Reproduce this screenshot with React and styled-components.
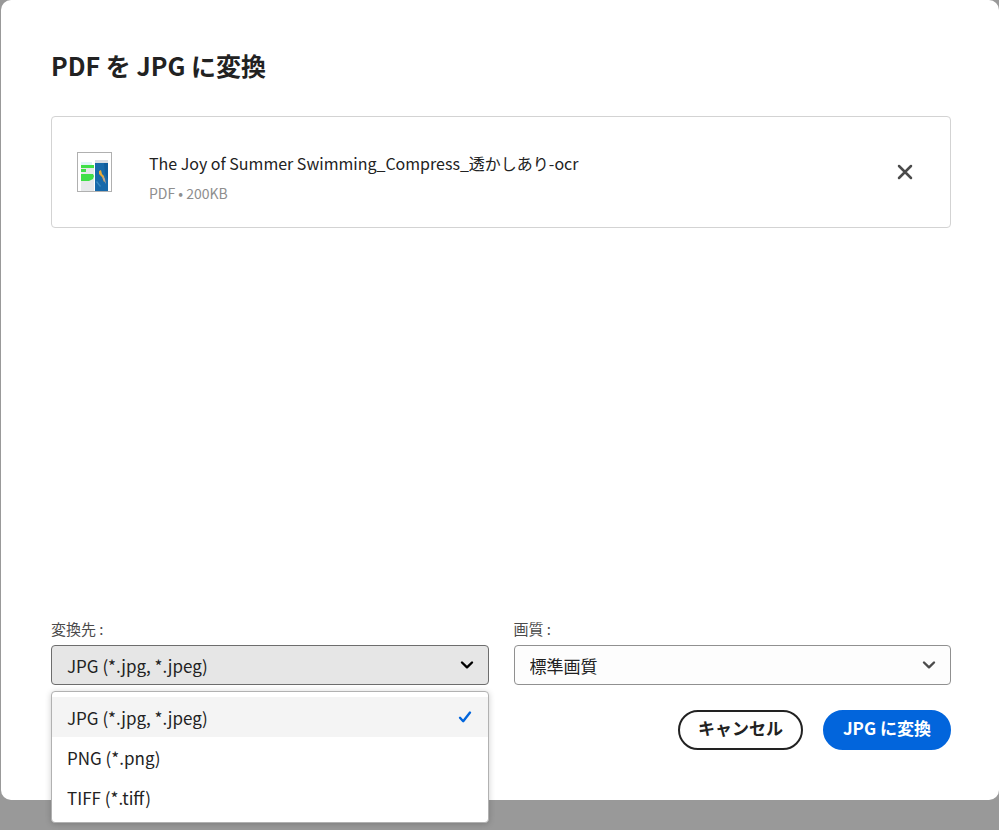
import React, { useState } from 'react'
import styled, { createGlobalStyle } from 'styled-components'

const colors = {
  text: '#222222',
  label: '#4b4b4b',
  muted: '#8e8e8e',
  border: '#d3d3d3',
  field: '#909090',
  blue: '#0265dc',
}

const formats = ['JPG (*.jpg, *.jpeg)', 'PNG (*.png)', 'TIFF (*.tiff)']
const qualities = ['標準画質']

const GlobalStyle = createGlobalStyle`
  * {
    box-sizing: border-box;
  }
  body {
    margin: 0;
    background: #999999;
    color: ${colors.text};
    font-family: 'Noto Sans CJK JP', 'Noto Sans', sans-serif;
  }
  button, select {
    font-family: inherit;
    color: inherit;
    margin: 0;
  }
`

const Dialog = styled.main`
  display: flex;
  flex-direction: column;
  min-height: calc(100vh - 30px);
  margin: 0 0 30px 1px;
  padding: 47px 48px 50px 50px;
  background: #ffffff;
  border-radius: 10px;
`

const Title = styled.h1`
  margin: 0 0 33px;
  font-size: 25px;
  line-height: 36px;
  font-weight: 700;
`

const Files = styled.div`
  flex: 1;
`

const FileCard = styled.section`
  display: flex;
  align-items: center;
  height: 112px;
  padding: 0 33px 0 25px;
  border: 1px solid ${colors.border};
  border-radius: 4px;
`

const Thumb = styled.svg`
  flex: none;
  width: 35px;
  height: 40px;
`

const FileInfo = styled.div`
  flex: 1;
  min-width: 0;
  margin-left: 37px;
  padding-top: 9px;
`

const FileName = styled.div`
  font-size: 16px;
  line-height: 32px;
`

const FileMeta = styled.div`
  color: ${colors.muted};
  font-size: 14px;
  line-height: 28px;
`

const CloseButton = styled.button`
  display: flex;
  padding: 4px;
  border: 0;
  background: none;
  color: ${colors.label};
  cursor: pointer;
`

const Fields = styled.div`
  display: grid;
  grid-template-columns: 1fr 1fr;
  gap: 25px;
`

const Field = styled.div`
  position: relative;
`

const Label = styled.label`
  display: block;
  padding-bottom: 4px;
  color: ${colors.label};
  font-size: 15px;
  line-height: 24px;
`

const SelectBox = styled.div`
  display: grid;
  align-items: center;
  color: ${props => (props.$open ? '#000000' : colors.label)};

  > * {
    grid-area: 1 / 1;
  }
  svg {
    justify-self: end;
    margin-right: 15px;
    pointer-events: none;
  }
`

const Select = styled.select`
  appearance: none;
  width: 100%;
  height: 40px;
  padding: 0 40px 0 15px;
  border: 1px solid ${props => (props.$open ? '#6d6d6d' : colors.field)};
  border-radius: 4px;
  background: ${props => (props.$open ? '#e6e6e6' : '#fdfdfd')};
  color: ${colors.text};
  font-size: 17px;
`

const Menu = styled.ul`
  position: absolute;
  top: 100%;
  left: 0;
  right: 0;
  margin: 6px 0 0;
  padding: 5px 0;
  list-style: none;
  border: 1px solid #b1b1b1;
  border-radius: 4px;
  background: #ffffff;
  box-shadow: 0 1px 6px rgba(0, 0, 0, 0.2);
`

const Option = styled.li`
  display: flex;
  align-items: center;
  justify-content: space-between;
  height: 40px;
  padding: 0 16px 0 15px;
  background: ${props => (props.$selected ? '#f4f4f4' : 'none')};
  font-size: 17px;
  cursor: pointer;

  svg {
    color: ${colors.blue};
  }
`

const Actions = styled.div`
  display: flex;
  justify-content: flex-end;
  gap: 20px;
  margin-top: 25px;
`

const Button = styled.button`
  height: 40px;
  padding: 0 18px 4px;
  border: 2px solid ${props => (props.$primary ? colors.blue : colors.text)};
  border-radius: 20px;
  background: ${props => (props.$primary ? colors.blue : '#ffffff')};
  color: ${props => (props.$primary ? '#ffffff' : colors.text)};
  font-size: 17px;
  line-height: 24px;
  font-weight: 700;
  cursor: pointer;
`

function Chevron() {
  return (
    <svg width="14" height="10" viewBox="0 0 14 10" fill="none" aria-hidden="true">
      <path d="M2 2.5l5 4.8 5-4.8" stroke="currentColor" strokeWidth="2.4" strokeLinecap="round" strokeLinejoin="round" />
    </svg>
  )
}

function Check() {
  return (
    <svg width="14" height="14" viewBox="0 0 14 14" fill="none" aria-hidden="true">
      <path d="M2 7.8l3.2 3.4L12 2.6" stroke="currentColor" strokeWidth="2.4" strokeLinecap="round" strokeLinejoin="round" />
    </svg>
  )
}

function Cross() {
  return (
    <svg width="16" height="16" viewBox="0 0 16 16" fill="none" aria-hidden="true">
      <path d="M2 2l12 12M14 2L2 14" stroke="currentColor" strokeWidth="2.5" strokeLinecap="round" />
    </svg>
  )
}

// small cover page: green text blocks on the left, pool photo on the right
function Thumbnail() {
  return (
    <Thumb viewBox="0 0 35 40" aria-hidden="true">
      <rect x="0.5" y="0.5" width="34" height="39" fill="#ffffff" stroke="#b0b0b0" />
      <rect x="4" y="10" width="11" height="3" fill="#dff4f7" />
      <rect x="4" y="16" width="13" height="23" fill="#e6e8ea" />
      <rect x="4" y="13" width="13" height="3" fill="#40df48" />
      <rect x="4" y="17" width="5" height="3" fill="#40df48" />
      <path d="M4 22h12l1 2-1 3-4 2H4z" fill="#40df48" />
      <rect x="18" y="8" width="13" height="3" fill="#d8dce2" />
      <rect x="18" y="11" width="13" height="28" fill="#1769aa" />
      <path d="M27 11h4v17l-3-7z" fill="#0f5c9c" />
      <path d="M22 19l2-1 1 4 2 2 1 5-1 1-2-5-3-3z" fill="#e8a936" />
      <path d="M26 24l2 3 1 5-3-5z" fill="#b7a59a" />
      <path d="M20 29l4 5-1 1-4-5z" fill="#398ac1" />
    </Thumb>
  )
}

function App() {
  const [format, setFormat] = useState(formats[0])
  const [quality, setQuality] = useState(qualities[0])
  const [open, setOpen] = useState(true)

  const toggle = e => {
    e.preventDefault()
    setOpen(prev => !prev)
  }
  const choose = item => {
    setFormat(item)
    setOpen(false)
  }

  return (
    <>
      <GlobalStyle />
      <Dialog>
        <Title>PDF を JPG に変換</Title>
        <Files>
          <FileCard>
            <Thumbnail />
            <FileInfo>
              <FileName>The Joy of Summer Swimming_Compress_透かしあり-ocr</FileName>
              <FileMeta>PDF • 200KB</FileMeta>
            </FileInfo>
            <CloseButton type="button" aria-label="削除">
              <Cross />
            </CloseButton>
          </FileCard>
        </Files>
        <Fields>
          <Field>
            <Label htmlFor="format">変換先 :</Label>
            <SelectBox $open={open}>
              <Select id="format" $open={open} value={format} onMouseDown={toggle} onChange={e => setFormat(e.target.value)}>
                {formats.map(item => <option key={item}>{item}</option>)}
              </Select>
              <Chevron />
            </SelectBox>
            {open && (
              <Menu role="listbox" aria-label="変換先">
                {formats.map(item => (
                  <Option
                    key={item}
                    role="option"
                    aria-selected={item === format}
                    $selected={item === format}
                    onClick={() => choose(item)}
                  >
                    {item}
                    {item === format && <Check />}
                  </Option>
                ))}
              </Menu>
            )}
          </Field>
          <Field>
            <Label htmlFor="quality">画質 :</Label>
            <SelectBox>
              <Select id="quality" value={quality} onChange={e => setQuality(e.target.value)}>
                {qualities.map(item => <option key={item}>{item}</option>)}
              </Select>
              <Chevron />
            </SelectBox>
          </Field>
        </Fields>
        <Actions>
          <Button type="button">キャンセル</Button>
          <Button type="button" $primary>JPG に変換</Button>
        </Actions>
      </Dialog>
    </>
  )
}

export default App
